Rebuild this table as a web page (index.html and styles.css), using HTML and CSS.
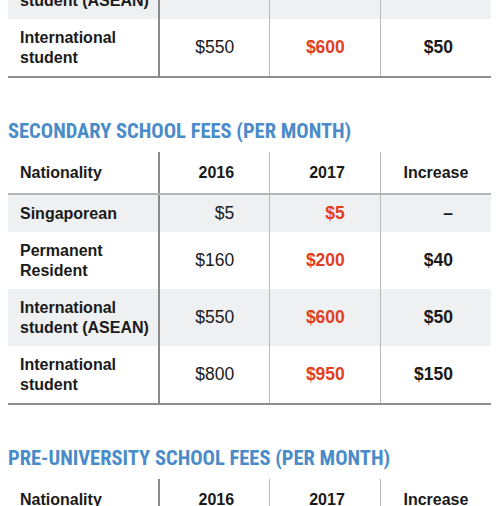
FILE: index.html
```html
<!DOCTYPE html>
<html lang="en">
<head>
    <meta charset="UTF-8">
    <meta name="viewport" content="width=device-width, initial-scale=1.0">
    <title>School fees</title>
    <link rel="stylesheet" href="styles.css">
</head>
<body>

<div class="container">
    <!-- Tail of primary school table -->
    <table class="fees fees-tail">
        <tbody>
            <tr class="shaded">
                <td class="who">International<br>student (ASEAN)</td>
                <td class="old">$390</td>
                <td class="new">$440</td>
                <td class="inc">$50</td>
            </tr>
            <tr>
                <td class="who">International<br>student</td>
                <td class="old">$550</td>
                <td class="new">$600</td>
                <td class="inc">$50</td>
            </tr>
        </tbody>
    </table>

    <!-- Secondary school -->
    <h2 class="section-title">SECONDARY SCHOOL FEES (PER MONTH)</h2>
    <table class="fees">
        <thead>
            <tr>
                <th class="who">Nationality</th>
                <th class="old">2016</th>
                <th class="new">2017</th>
                <th class="inc">Increase</th>
            </tr>
        </thead>
        <tbody>
            <tr class="shaded">
                <td class="who">Singaporean</td>
                <td class="old">$5</td>
                <td class="new">$5</td>
                <td class="inc">–</td>
            </tr>
            <tr>
                <td class="who">Permanent<br>Resident</td>
                <td class="old">$160</td>
                <td class="new">$200</td>
                <td class="inc">$40</td>
            </tr>
            <tr class="shaded">
                <td class="who">International<br>student (ASEAN)</td>
                <td class="old">$550</td>
                <td class="new">$600</td>
                <td class="inc">$50</td>
            </tr>
            <tr>
                <td class="who">International<br>student</td>
                <td class="old">$800</td>
                <td class="new">$950</td>
                <td class="inc">$150</td>
            </tr>
        </tbody>
    </table>

    <!-- Pre-university -->
    <h2 class="section-title">PRE-UNIVERSITY SCHOOL FEES (PER MONTH)</h2>
    <table class="fees">
        <thead>
            <tr>
                <th class="who">Nationality</th>
                <th class="old">2016</th>
                <th class="new">2017</th>
                <th class="inc">Increase</th>
            </tr>
        </thead>
        <tbody>
            <tr class="shaded">
                <td class="who">Singaporean</td>
                <td class="old">$6</td>
                <td class="new">$6</td>
                <td class="inc">–</td>
            </tr>
        </tbody>
    </table>
</div>

</body>
</html>
```

FILE: styles.css
```css
body {
    font-family: 'Liberation Sans', Arial, sans-serif;
    background-color: #fff;
    color: #1a1a1a;
    margin: 0;
    padding: 0;
}

.container {
    padding: 0 9px 0 8px;
}

.fees {
    width: 100%;
    border-collapse: collapse;
    table-layout: fixed;
    border-bottom: 2px solid #8e8e8e;
    margin-bottom: 42px;
}

.fees-tail {
    margin-top: -38px;
}

.fees th,
.fees td {
    font-size: 16px;
    line-height: 19.5px;
    padding: 9px 12px;
    vertical-align: middle;
}

.fees th {
    font-weight: bold;
    padding-top: 11px;
    padding-bottom: 10px;
    border-bottom: 2px solid #b4b4b4;
}

.fees .who {
    width: 136px;
    padding-right: 2px;
    text-align: left;
    font-weight: bold;
    white-space: nowrap;
}

.fees .old,
.fees .new,
.fees .inc {
    border-left: 1px solid #b9b9b9;
}

.fees .old {
    border-left: 2px solid #8a8a8a;
    text-align: right;
    padding-right: 35px;
}

.fees td.old {
    font-size: 17.5px;
}

.fees .new {
    text-align: right;
    padding-right: 35px;
}

.fees td.new {
    color: #e0401e;
    font-weight: bold;
    font-size: 17.5px;
}

.fees .inc {
    text-align: right;
    padding-right: 38px;
}

.fees th.inc {
    text-align: center;
    padding-right: 12px;
}

.fees td.inc {
    font-weight: bold;
    font-size: 17.5px;
}

.shaded td {
    background-color: #eef0f2;
}

.section-title {
    font-family: Roboto, 'DejaVu Sans Condensed', sans-serif;
    font-stretch: 75%;
    font-weight: bold;
    font-size: 20.5px;
    line-height: 22px;
    color: #4a8bc9;
    margin: 0 0 10px 0;
}
```
